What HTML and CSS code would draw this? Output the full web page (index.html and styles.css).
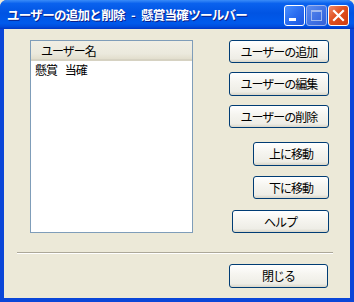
FILE: index.html
```html
<!DOCTYPE html>
<html lang="ja">
<head>
<meta charset="utf-8">
<title>ユーザーの追加と削除</title>
<link rel="stylesheet" href="styles.css">
</head>
<body>
<div class="window">
  <div class="titlebar">
    <span class="title">ユーザーの追加と削除 - 懸賞当確ツールバー</span>
    <div class="controls">
      <span class="cbtn min"><svg width="21" height="21" viewBox="0 0 21 21"><rect x="5" y="13" width="7" height="3" fill="#fff"/></svg></span>
      <span class="cbtn max"><svg width="21" height="21" viewBox="0 0 21 21"><rect x="5.5" y="5.5" width="10" height="10" fill="none" stroke="#9fb9f0" stroke-width="1"/><rect x="5" y="5" width="11" height="2" fill="#9fb9f0"/></svg></span>
      <span class="cbtn close"><svg width="21" height="21" viewBox="0 0 21 21"><path d="M6 6 L15 15 M15 6 L6 15" stroke="#fff" stroke-width="2.2" stroke-linecap="square"/></svg></span>
    </div>
  </div>
  <div class="client">
    <div class="main">
      <div class="listbox">
        <div class="lhead">ユーザー名</div>
        <div class="litem">懸賞 当確</div>
      </div>
      <div class="side">
        <button class="btn w100 b1">ユーザーの追加</button>
        <button class="btn w100 b2">ユーザーの編集</button>
        <button class="btn w100 b3">ユーザーの削除</button>
        <button class="btn w76 b4">上に移動</button>
        <button class="btn w76 b5">下に移動</button>
        <button class="btn w97 b6">ヘルプ</button>
      </div>
    </div>
    <div class="sep"></div>
    <div class="footer">
      <button class="btn w99 bclose">閉じる</button>
    </div>
  </div>
</div>
</body>
</html>
```
FILE: styles.css
```css
* { box-sizing: border-box; }
html, body { margin: 0; padding: 0; background: #ECE9D8; }
body { font-family: "Noto Sans CJK JP", "DejaVu Sans", sans-serif; font-size: 12px; }
.window { width: 354px; height: 302px; display: flex; flex-direction: column; background: #0A46D8; border-radius: 7px 7px 0 0; overflow: hidden; }
.titlebar {
  height: 29px; display: flex; align-items: center; justify-content: space-between;
  padding: 0 5px 0 7px;
  background: linear-gradient(to bottom, #3A8CF8 0%, #0A62EE 12%, #0054E3 45%, #005AEC 80%, #004CDC 92%, #0036C4 100%);
}
.title { color: #fff; font-weight: bold; font-size: 12.5px; letter-spacing: -0.7px; word-spacing: 4px; text-shadow: 1px 1px 0 #0A1E8C; white-space: nowrap; }
.controls { display: flex; gap: 1px; margin-top: 1px; }
.cbtn { width: 21px; height: 21px; border: 1px solid #fff; border-radius: 3px; display: flex; overflow: hidden; }
.cbtn svg { margin: -1px; flex: none; }
.min { background: linear-gradient(135deg, #4A90FF 0%, #2A6DF0 50%, #1C56E0 100%); }
.max { background: linear-gradient(135deg, #5D8DEF 0%, #3D6FE3 60%, #3360D8 100%); border-color: #9DB4EE; }
.close { background: linear-gradient(135deg, #F08A6A 0%, #E0501E 45%, #D03C10 100%); }
.client { flex: 1; margin: 0 4px 4px 4px; background: #ECE9D8; display: flex; flex-direction: column; }
.main { display: flex; padding: 11px 21px 0 26px; justify-content: space-between; }
.listbox { width: 163px; height: 193px; border: 1px solid #7F9DB9; background: #fff; }
.lhead {
  height: 20px; padding-left: 10px; line-height: 19px; color: #000;
  background: linear-gradient(to bottom, #F0EEE4 0%, #EBE9DD 70%, #E2DECD 100%);
  border-bottom: 2px solid #D6D2C2; letter-spacing: -1px;
}
.litem { padding-left: 4px; line-height: 16px; margin-top: 1px; letter-spacing: -1px; word-spacing: 6px; }
.side { display: flex; flex-direction: column; align-items: flex-end; }
.btn {
  font-family: inherit; font-size: 12px; letter-spacing: -1px; color: #000;
  height: 23px; padding: 0; margin: 0;
  border: 1px solid #003C74; border-radius: 3px;
  background: linear-gradient(to bottom, #FFFFFF 0%, #F6F5F0 40%, #EEEDE6 85%, #D8D5C8 100%);
  line-height: 20px;
}
.w100 { width: 100px; }
.w76 { width: 76px; }
.w97 { width: 97px; }
.w99 { width: 99px; height: 24px; }
.b1 { margin-top: 0; }
.b2 { margin-top: 9px; height: 24px; }
.b3 { margin-top: 9px; }
.b4 { margin-top: 14px; height: 24px; }
.b5 { margin-top: 10px; }
.b6 { margin-top: 11px; }
.sep { margin: 19px 17px 0 13px; height: 2px; border-top: 1px solid #ACA899; border-bottom: 1px solid #fff; }
.footer { display: flex; justify-content: flex-end; padding: 10px 22px 0 0; }
```
